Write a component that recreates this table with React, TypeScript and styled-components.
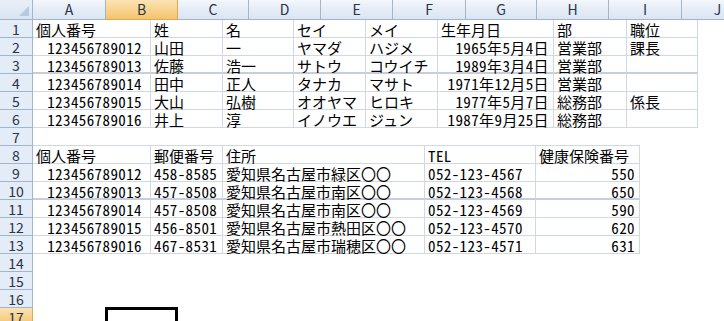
import React from 'react'
import styled, { createGlobalStyle, css } from 'styled-components'

const GlobalStyle = createGlobalStyle`
  html, body {
    margin: 0;
    padding: 0;
    background: #ffffff;
    overflow: hidden;
  }
  * { box-sizing: border-box; }
`

const FONT = `"Noto Sans CJK JP", "Noto Sans", sans-serif`
const HEAD_LINE = '#9eb6ce'
const GRID = '#d0d7e5'

const Sheet = styled.div`
  position: relative;
  width: 724px;
  height: 321px;
  overflow: hidden;
  font-family: ${FONT};
  background: #fff;
`

const ColumnBar = styled.div`
  display: flex;
  height: 20px;
`

const Corner = styled.div`
  position: relative;
  flex: 0 0 33px;
  height: 20px;
  background: linear-gradient(#e9eff8, #d9e4f2);
  border-right: 1px solid ${HEAD_LINE};
  border-bottom: 1px solid ${HEAD_LINE};
  &::after {
    content: '';
    position: absolute;
    right: 3px;
    bottom: 3px;
    border-left: 10px solid transparent;
    border-bottom: 10px solid #b7c9e0;
  }
`

const ColumnHead = styled.div<{ $w: number; $active?: boolean }>`
  flex: 0 0 ${p => p.$w}px;
  height: 20px;
  display: flex;
  align-items: center;
  justify-content: center;
  font-size: 14px;
  line-height: 19px;
  color: #27344a;
  border-right: 1px solid ${HEAD_LINE};
  border-bottom: 1px solid ${HEAD_LINE};
  background: linear-gradient(#f4f7fb 0%, #e6edf7 45%, #dbe5f2 100%);
  ${p =>
    p.$active &&
    css`
      background: linear-gradient(#fbe3b5 0%, #f8d595 45%, #f3c46c 100%);
      border-right-color: #e2a84a;
      border-bottom-color: #e2a84a;
    `}
`

const Body = styled.div`
  display: flex;
`

const RowBar = styled.div`
  flex: 0 0 33px;
  display: flex;
  flex-direction: column;
`

const RowHead = styled.div<{ $active?: boolean }>`
  height: 18px;
  display: flex;
  align-items: center;
  justify-content: center;
  font-size: 14px;
  line-height: 17px;
  padding-top: 1px;
  color: #27344a;
  background: #e4ecf7;
  border-right: 1px solid ${HEAD_LINE};
  border-bottom: 1px solid ${HEAD_LINE};
  ${p =>
    p.$active &&
    css`
      background: linear-gradient(#fbe3b5, #f3c46c);
      border-right-color: #e2a84a;
      border-bottom-color: #e2a84a;
    `}
`

const Cells = styled.div`
  display: flex;
  flex-direction: column;
  align-items: flex-start;
`

const Table = styled.div<{ $cols: number[]; $gap?: boolean }>`
  display: grid;
  grid-template-columns: ${p => p.$cols.map(c => `${c}px`).join(' ')};
  grid-auto-rows: 18px;
  ${p =>
    p.$gap &&
    css`
      margin-top: 17px;
      border-top: 1px solid ${GRID};
    `}
`

const Cell = styled.div<{ $right?: boolean; $pad?: number; $heavy?: boolean; $latin?: boolean }>`
  height: 18px;
  padding: 1px ${p => (p.$right ? p.$pad ?? 4 : 2)}px 0 ${p => (p.$right ? 0 : 3)}px;
  text-align: ${p => (p.$right ? 'right' : 'left')};
  font-size: 15px;
  line-height: 17px;
  letter-spacing: ${p => (p.$latin ? 0.4 : 0)}px;
  font-feature-settings: 'hwid';
  color: #000;
  white-space: nowrap;
  border-right: 1px solid ${GRID};
  border-bottom: ${p => (p.$heavy ? 2 : 1)}px solid ${p => (p.$heavy ? '#c5cedd' : GRID)};
`

const Selection = styled.div`
  position: absolute;
  left: 105px;
  top: 307px;
  width: 73px;
  height: 30px;
  border: 3px solid #000;
  pointer-events: none;
`

const columns = ['A', 'B', 'C', 'D', 'E', 'F', 'G', 'H', 'I', 'J']
const columnWidths = [73, 72, 71, 72, 72, 73, 71, 72, 73, 72]

type Value = { v: string; right?: boolean; pad?: number; latin?: boolean }
type Row = (string | Value)[]

// right aligned numbers / dates, and half-width text such as postcodes
const num = (v: string, pad?: number): Value => ({ v, right: true, pad, latin: true })
const lat = (v: string): Value => ({ v, latin: true })

const staffCols = [118, 72, 71, 72, 72, 116, 73, 71]
const staffRows: Row[] = [
  ['個人番号', '姓', '名', 'セイ', 'メイ', '生年月日', '部', '職位'],
  [num('123456789012', 8), '山田', '一', 'ヤマダ', 'ハジメ', num('1965年5月4日'), '営業部', '課長'],
  [num('123456789013', 8), '佐藤', '浩一', 'サトウ', 'コウイチ', num('1989年3月4日'), '営業部', ''],
  [num('123456789014', 8), '田中', '正人', 'タナカ', 'マサト', num('1971年12月5日'), '営業部', ''],
  [num('123456789015', 8), '大山', '弘樹', 'オオヤマ', 'ヒロキ', num('1977年5月7日'), '総務部', '係長'],
  [num('123456789016', 8), '井上', '淳', 'イノウエ', 'ジュン', num('1987年9月25日'), '総務部', ''],
]

const addressCols = [118, 72, 202, 111, 104]
const addressRows: Row[] = [
  ['個人番号', '郵便番号', '住所', lat('TEL'), '健康保険番号'],
  [num('123456789012', 8), lat('458-8585'), '愛知県名古屋市緑区〇〇', lat('052-123-4567'), num('550')],
  [num('123456789013', 8), lat('457-8508'), '愛知県名古屋市南区〇〇', lat('052-123-4568'), num('650')],
  [num('123456789014', 8), lat('457-8508'), '愛知県名古屋市南区〇〇', lat('052-123-4569'), num('590')],
  [num('123456789015', 8), lat('456-8501'), '愛知県名古屋市熱田区〇〇', lat('052-123-4570'), num('620')],
  [num('123456789016', 8), lat('467-8531'), '愛知県名古屋市瑞穂区〇〇', lat('052-123-4571'), num('631')],
]

// heavyRow gets the darker page-break rule underneath
const renderTable = (rows: Row[], cols: number[], heavyRow: number, gap?: boolean) => (
  <Table $cols={cols} $gap={gap}>
    {rows.map((row, r) =>
      row.map((cell, c) => {
        const v: Value = typeof cell === 'string' ? { v: cell } : cell
        return (
          <Cell
            key={`${r}-${c}`}
            $right={v.right}
            $pad={v.pad}
            $latin={v.latin}
            $heavy={r === heavyRow}
          >
            {v.v}
          </Cell>
        )
      })
    )}
  </Table>
)

const App = () => {
  const rowNumbers = Array.from({ length: 17 }, (_, i) => i + 1)
  return (
    <>
      <GlobalStyle />
      <Sheet>
        <ColumnBar>
          <Corner />
          {columns.map((c, i) => (
            <ColumnHead key={c} $w={columnWidths[i]} $active={c === 'B'}>
              {c}
            </ColumnHead>
          ))}
        </ColumnBar>
        <Body>
          <RowBar>
            {rowNumbers.map(r => (
              <RowHead key={r} $active={r === 17}>
                {r}
              </RowHead>
            ))}
          </RowBar>
          <Cells>
            {renderTable(staffRows, staffCols, 2)}
            {renderTable(addressRows, addressCols, 2, true)}
          </Cells>
        </Body>
        <Selection />
      </Sheet>
    </>
  )
}

export default App
